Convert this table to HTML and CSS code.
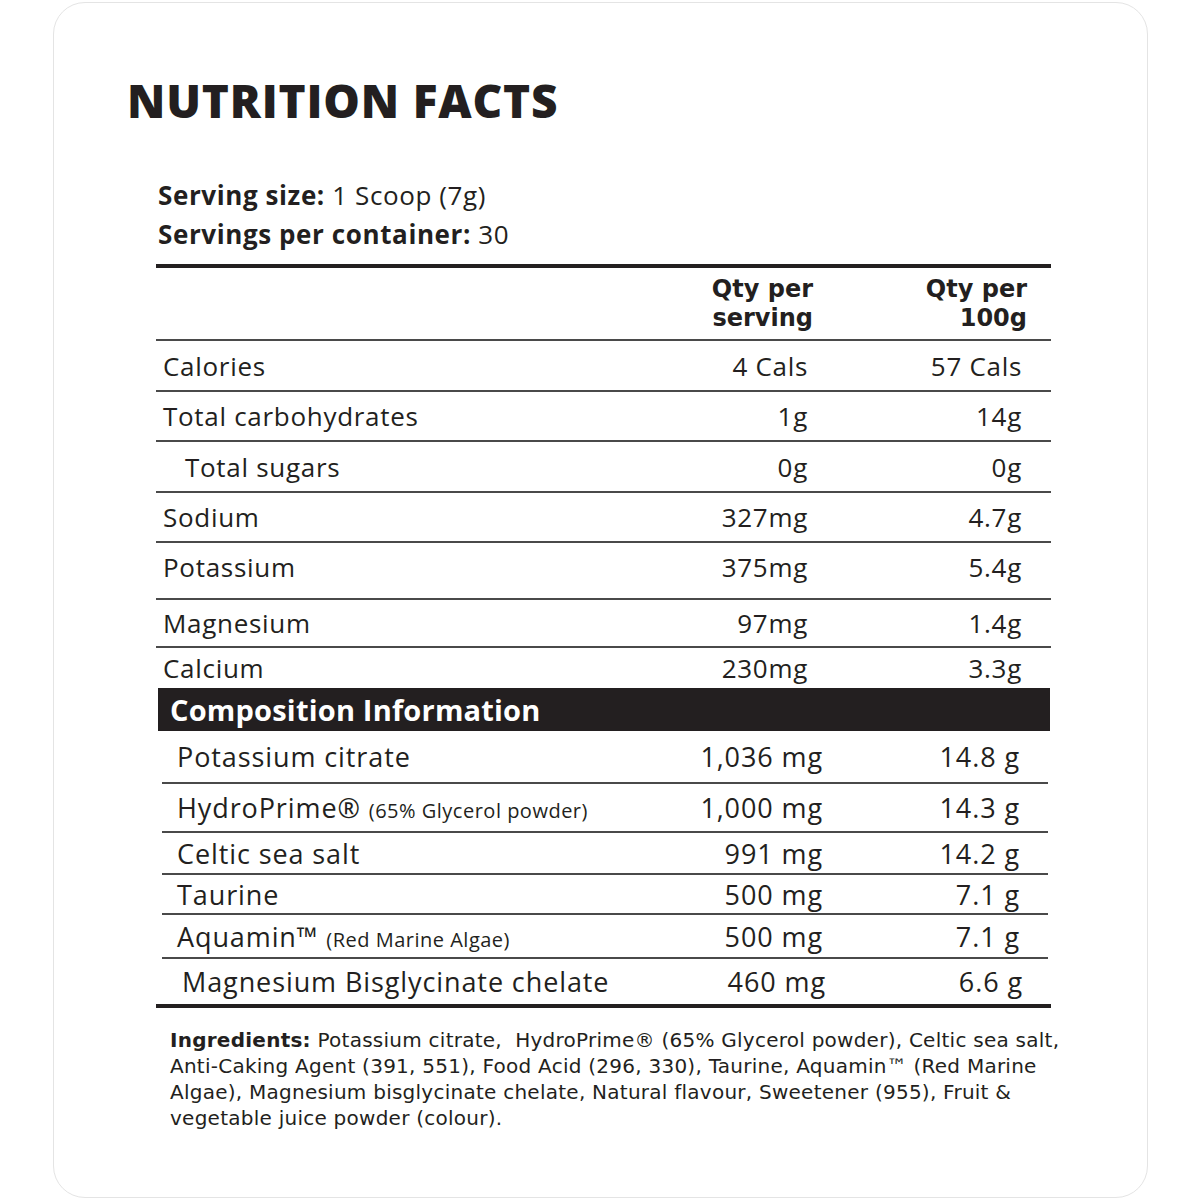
FILE: index.html
```html
<!DOCTYPE html>
<html lang="en">
<head>
<meta charset="utf-8">
<title>Nutrition Facts</title>
<link rel="stylesheet" href="styles.css">
</head>
<body>
<div class="card">
  <h1 class="title">NUTRITION FACTS</h1>
  <div class="serving">
    <p><b>Serving size:</b> 1 Scoop (7g)</p>
    <p><b>Servings per container:</b> 30</p>
  </div>
  <div class="table">
    <div class="row head">
      <span></span>
      <span class="v">Qty per<br>serving</span>
      <span class="v">Qty per<br>100g</span>
    </div>
    <div class="row r50"><span>Calories</span><span class="v">4 Cals</span><span class="v">57 Cals</span></div>
    <div class="row r49"><span>Total carbohydrates</span><span class="v">1g</span><span class="v">14g</span></div>
    <div class="row r50 sub"><span>Total sugars</span><span class="v">0g</span><span class="v">0g</span></div>
    <div class="row r49"><span>Sodium</span><span class="v">327mg</span><span class="v">4.7g</span></div>
    <div class="row r56 lift"><span>Potassium</span><span class="v">375mg</span><span class="v">5.4g</span></div>
    <div class="row r47"><span>Magnesium</span><span class="v">97mg</span><span class="v">1.4g</span></div>
    <div class="row r40 last"><span>Calcium</span><span class="v">230mg</span><span class="v">3.3g</span></div>
    <div class="band">Composition Information</div>
    <div class="row comp r52"><span>Potassium citrate</span><span class="v">1,036 mg</span><span class="v">14.8 g</span></div>
    <div class="row comp r48"><span>HydroPrime® <small>(65% Glycerol powder)</small></span><span class="v">1,000 mg</span><span class="v">14.3 g</span></div>
    <div class="row comp r41"><span>Celtic sea salt</span><span class="v">991 mg</span><span class="v">14.2 g</span></div>
    <div class="row comp r40"><span>Taurine</span><span class="v">500 mg</span><span class="v">7.1 g</span></div>
    <div class="row comp r43"><span>Aquamin™ <small>(Red Marine Algae)</small></span><span class="v">500 mg</span><span class="v">7.1 g</span></div>
    <div class="row comp r48 end"><span>Magnesium Bisglycinate chelate</span><span class="v">460 mg</span><span class="v">6.6 g</span></div>
  </div>
  <p class="ingredients"><b>Ingredients:</b> Potassium citrate,&nbsp; HydroPrime® (65% Glycerol powder), Celtic sea salt,<br>Anti-Caking Agent (391, 551), Food Acid (296, 330), Taurine, Aquamin™ (Red Marine<br>Algae), Magnesium bisglycinate chelate, Natural flavour, Sweetener (955), Fruit &amp;<br>vegetable juice powder (colour).</p>
</div>
</body>
</html>
```
FILE: styles.css
```css
* { box-sizing: border-box; }
html, body { margin: 0; padding: 0; background: #fff; }
body {
  font-family: "Open Sans", "Liberation Sans", sans-serif;
  color: #231f20;
  padding: 2px 0 2px 53px;
}
.card {
  width: 1095px;
  height: 1196px;
  border: 1.5px solid #e4e4e4;
  border-radius: 32px;
  padding: 0 0 0 102px;
}
.title {
  margin: 69px 0 0 -29px;
  font-size: 46px;
  font-weight: 800;
  line-height: 56px;
  letter-spacing: 0.8px;
}
.serving {
  margin-top: 48px;
  padding-left: 2px;
  font-size: 26px;
  line-height: 39px;
  letter-spacing: 0.6px;
}
.serving p { margin: 0; }
.serving b { font-weight: 700; }
.table {
  margin-top: 10px;
  width: 895px;
  border-top: 4px solid #231f20;
}
.row {
  display: grid;
  grid-template-columns: 1fr 200px 214px;
  align-items: center;
  padding: 0 29px 0 7px;
  font-size: 26px;
  letter-spacing: 0.7px;
  border-bottom: 2px solid #4a4a4a;
}
.row .v { text-align: right; }
.row.head {
  height: 73px;
  font-family: "DejaVu Sans", "Open Sans", sans-serif;
  font-size: 24px;
  font-weight: 700;
  line-height: 29px;
  letter-spacing: 0;
  padding-right: 24px;
  padding-bottom: 0;
}
.row.sub span:first-child { padding-left: 22px; }
.row.lift { padding-bottom: 8px; }
.row.last { border-bottom: none; }
.r40 { height: 40px; }
.r41 { height: 42px; }
.r43 { height: 44px; }
.r47 { height: 48px; }
.r48 { height: 49px; }
.r49 { height: 50px; }
.r50 { height: 51px; }
.r52 { height: 53px; }
.r56 { height: 57px; }
.band {
  margin: 0 1px 0 2px;
  height: 43px;
  background: #231f20;
  color: #fff;
  font-size: 29px;
  font-weight: 700;
  line-height: 43px;
  letter-spacing: 0.2px;
  padding-left: 12px;
}
.row.comp {
  grid-template-columns: 1fr 200px 197px;
  padding: 0 28px 0 15px;
  margin: 0 3px 0 6px;
  font-size: 27px;
  letter-spacing: 0.9px;
}
.row.comp small { font-size: 20px; letter-spacing: 0.5px; }
.row.comp.end {
  margin: 0;
  padding-left: 26px;
  padding-right: 28px;
  border-bottom: 4px solid #231f20;
}
.ingredients {
  margin: 19px 0 0 14px;
  font-family: "DejaVu Sans", "Open Sans", sans-serif;
  font-size: 20px;
  line-height: 26px;
  letter-spacing: 0.25px;
}
.ingredients b { font-weight: 700; }
```
